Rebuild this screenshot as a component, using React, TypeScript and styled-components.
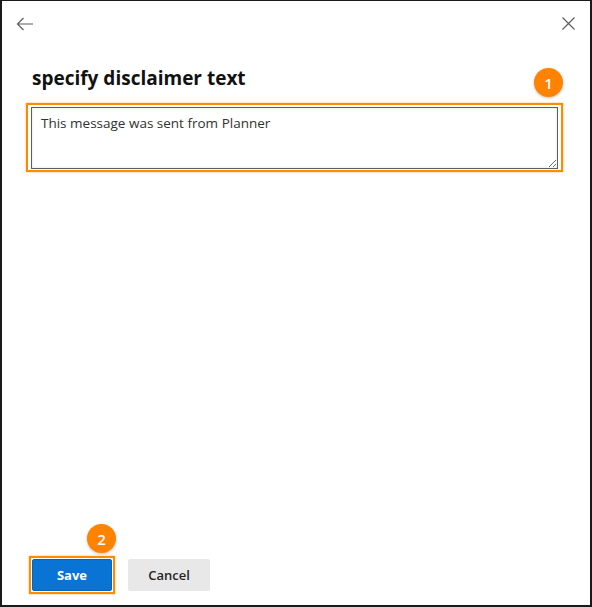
import React, { useState } from 'react'
import styled, { createGlobalStyle } from 'styled-components'

const GlobalStyle = createGlobalStyle`
  html, body {
    margin: 0;
    padding: 0;
    background: #ffffff;
  }
  * {
    box-sizing: border-box;
  }
`

const Panel = styled.div`
  position: relative;
  width: 592px;
  height: 607px;
  border: 2px solid #1a1a1a;
  border-top-width: 1px;
  background: #ffffff;
  display: flex;
  flex-direction: column;
  font-family: "Open Sans", "Noto Sans", sans-serif;
  color: #1f1f1f;
`

const TopBar = styled.div`
  display: flex;
  justify-content: space-between;
  align-items: center;
  height: 44px;
  padding: 1px 11px 0 12px;
`

const IconButton = styled.button`
  width: 22px;
  height: 22px;
  padding: 0;
  border: none;
  background: transparent;
  display: flex;
  align-items: center;
  justify-content: center;
  cursor: pointer;
  color: #605e5c;
`

const Body = styled.div`
  flex: 1;
  padding: 20px 27px 0 24px;
`

const Title = styled.h2`
  margin: 0 0 12px 6px;
  font-size: 19px;
  font-weight: 700;
  line-height: 26px;
  color: #111111;
`

const Highlight = styled.div`
  border: 2px solid #ff8c00;
  box-shadow: 0 0 2px rgba(255, 140, 0, 0.6);
  padding: 2px 3px 1px 3px;
`

const TextBox = styled.textarea`
  display: block;
  width: 100%;
  height: 62px;
  border: 1px solid #605e5c;
  border-radius: 0;
  padding: 6px 9px;
  font-family: "Open Sans", "Noto Sans", sans-serif;
  font-size: 13.5px;
  line-height: 18px;
  color: #323130;
  resize: vertical;
  outline: none;
  box-shadow: inset 0 0 3px rgba(0, 0, 0, 0.12);
`

const Footer = styled.div`
  display: flex;
  align-items: center;
  gap: 13px;
  padding: 0 0 11px 27px;
`

const ButtonFrame = styled.div`
  border: 2px solid #ff8c00;
  box-shadow: 0 0 2px rgba(255, 140, 0, 0.6);
  padding: 1px;
`

const Button = styled.button<{ $primary?: boolean }>`
  width: ${p => (p.$primary ? '80px' : '82px')};
  height: 32px;
  border: 1px solid ${p => (p.$primary ? '#0067c0' : '#e8e8e8')};
  border-radius: 2px;
  background: ${p => (p.$primary ? '#0a74d4' : '#e8e8e8')};
  color: ${p => (p.$primary ? '#ffffff' : '#242424')};
  font-family: "Open Sans", "Noto Sans", sans-serif;
  font-size: 13px;
  font-weight: ${p => (p.$primary ? 700 : 600)};
  cursor: pointer;
`

const Badge = styled.div<{ $left: number; $top: number }>`
  position: absolute;
  left: ${p => p.$left}px;
  top: ${p => p.$top}px;
  width: 29px;
  height: 29px;
  border-radius: 50%;
  background: #ff8300;
  color: #ffffff;
  font-family: "Open Sans", "Noto Sans", sans-serif;
  font-size: 15px;
  font-weight: 600;
  display: flex;
  align-items: center;
  justify-content: center;
  box-shadow: 0 1px 3px rgba(0, 0, 0, 0.25);
`

export default function App() {
  const [text, setText] = useState('This message was sent from Planner')

  return (
    <>
      <GlobalStyle />
      <Panel>
        <TopBar>
          <IconButton aria-label="Back">
            <svg width="18" height="14" viewBox="0 0 18 14" fill="none" stroke="currentColor" strokeWidth="1.2">
              <path d="M17 7H1.5M7.5 1L1.5 7l6 6" />
            </svg>
          </IconButton>
          <IconButton aria-label="Close">
            <svg width="13" height="13" viewBox="0 0 13 13" fill="none" stroke="currentColor" strokeWidth="1.2">
              <path d="M0.5 0.5l12 12M12.5 0.5l-12 12" />
            </svg>
          </IconButton>
        </TopBar>
        <Body>
          <Title>specify disclaimer text</Title>
          <Highlight>
            <TextBox value={text} onChange={e => setText(e.target.value)} />
          </Highlight>
        </Body>
        <Footer>
          <ButtonFrame>
            <Button $primary>Save</Button>
          </ButtonFrame>
          <Button>Cancel</Button>
        </Footer>
        <Badge $left={532} $top={67}>1</Badge>
        <Badge $left={85} $top={523}>2</Badge>
      </Panel>
    </>
  )
}
